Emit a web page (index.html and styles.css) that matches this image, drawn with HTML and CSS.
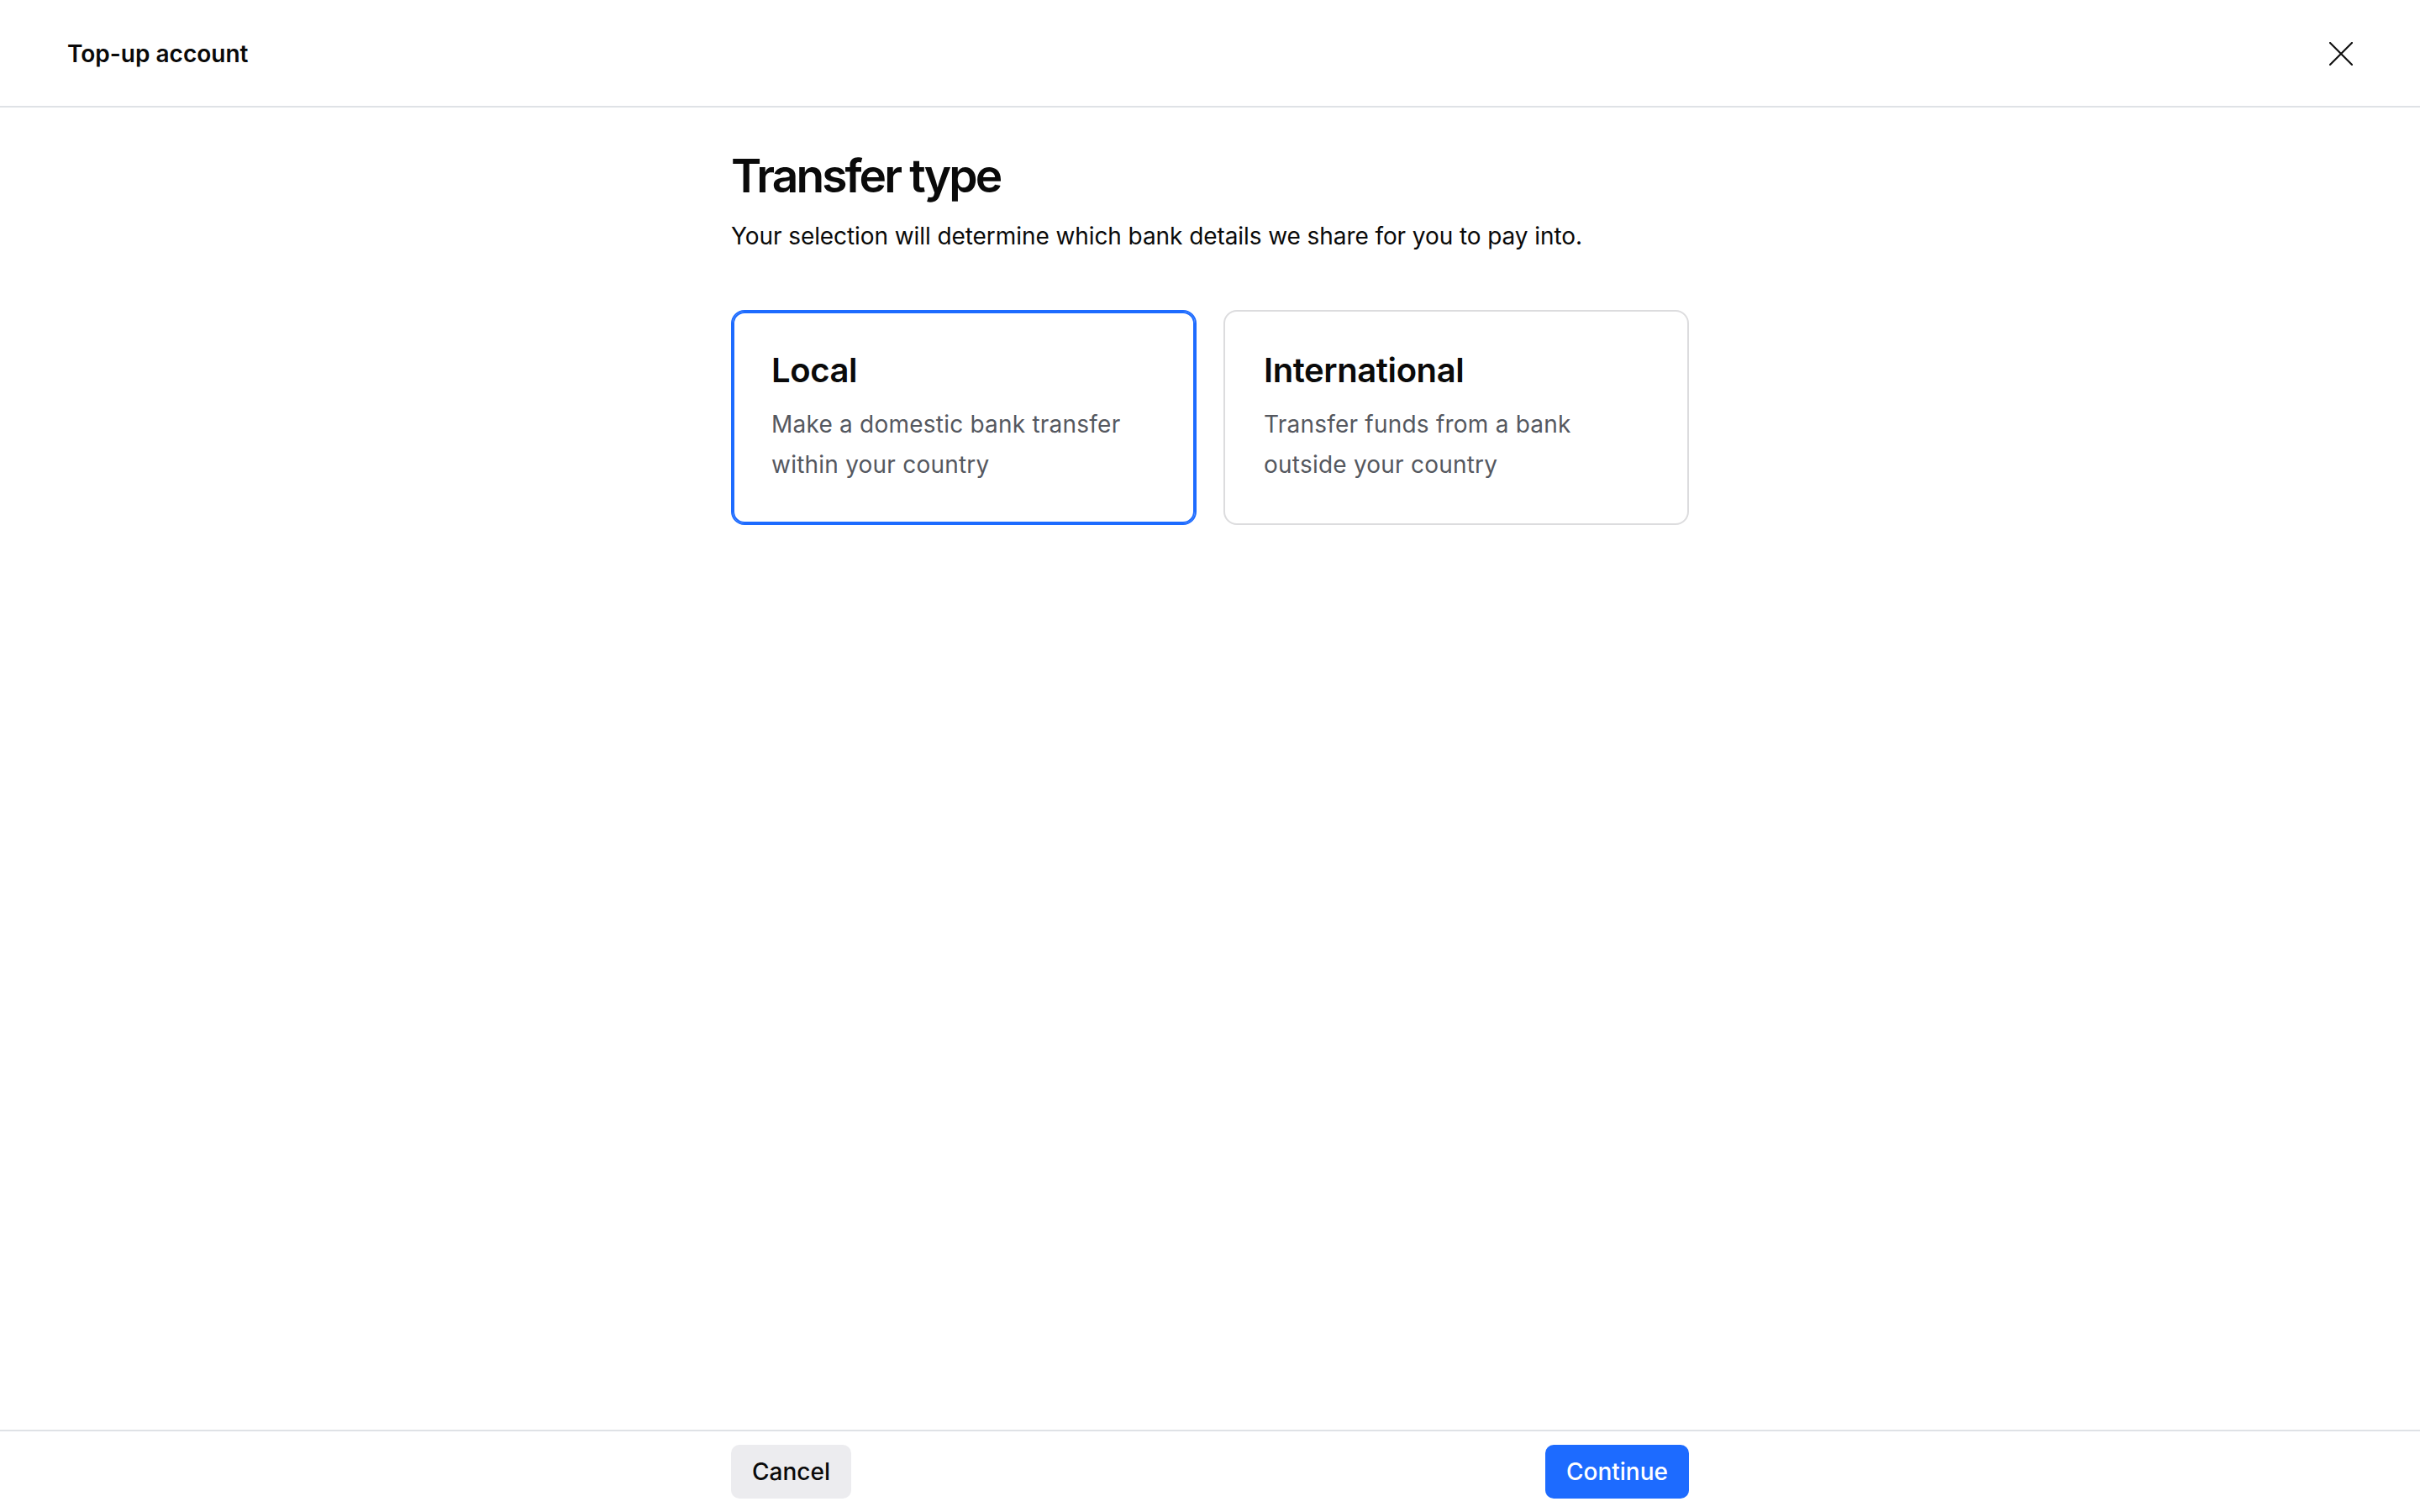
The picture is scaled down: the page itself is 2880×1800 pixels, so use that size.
FILE: index.html
```html
<!DOCTYPE html>
<html lang="en">
<head>
    <meta charset="UTF-8">
    <meta name="viewport" content="width=device-width, initial-scale=1.0">
    <title>Top-up account</title>
    <link rel="stylesheet" href="styles.css">
</head>
<body>
    <header class="topbar">
        <span class="topbar-title">Top-up account</span>
        <button class="close-btn" aria-label="Close">
            <svg width="28" height="28" viewBox="0 0 28 28" fill="none" stroke="#111" stroke-width="2.2" stroke-linecap="round">
                <path d="M1 1 L27 27 M27 1 L1 27"/>
            </svg>
        </button>
    </header>

    <main class="content">
        <div class="wrap">
            <h1>Transfer type</h1>
            <p class="lead">Your selection will determine which bank details we share for you to pay into.</p>

            <div class="options">
                <div class="option selected">
                    <h2>Local</h2>
                    <p>Make a domestic bank transfer within your country</p>
                </div>
                <div class="option">
                    <h2>International</h2>
                    <p>Transfer funds from a bank outside your country</p>
                </div>
            </div>
        </div>
    </main>

    <footer class="bottombar">
        <div class="wrap actions">
            <button class="btn btn-secondary">Cancel</button>
            <button class="btn btn-primary">Continue</button>
        </div>
    </footer>
</body>
</html>
```

FILE: styles.css
```css
* {
    box-sizing: border-box;
}
html, body {
    height: 100%;
}
body {
    margin: 0;
    font-family: Inter, "Noto Sans", sans-serif;
    color: #0a0a0a;
    background: #fff;
    display: flex;
    flex-direction: column;
}
.topbar {
    height: 128px;
    padding: 2px 80px 0;
    border-bottom: 2px solid #dfe2e6;
    display: flex;
    align-items: center;
    justify-content: space-between;
}
.topbar-title {
    font-size: 28px;
    font-weight: 600;
    letter-spacing: 0;
}
.close-btn {
    background: none;
    border: none;
    padding: 0;
    width: 28px;
    height: 28px;
    cursor: pointer;
    display: flex;
}
.content {
    flex: 1;
    padding-top: 47px;
}
.wrap {
    width: 1140px;
    margin: 0 auto;
}
h1 {
    margin: 0;
    font-size: 55px;
    line-height: 68px;
    font-weight: 600;
    letter-spacing: -2.9px;
}
.lead {
    margin: 18px 0 0;
    font-size: 28px;
    line-height: 40px;
    letter-spacing: -0.08px;
}
.options {
    margin-top: 68px;
    display: grid;
    grid-template-columns: 1fr 1fr;
    gap: 32px;
}
.option {
    border: 2px solid #dcdcde;
    border-radius: 16px;
    padding: 46px;
    cursor: pointer;
}
.option.selected {
    border-color: #1d6bff;
    box-shadow: inset 0 0 0 2px #1d6bff;
}
.option h2 {
    margin: 0 0 16px;
    font-size: 40px;
    line-height: 48px;
    font-weight: 600;
    letter-spacing: -0.4px;
}
.option p {
    margin: 0;
    font-size: 28px;
    line-height: 48px;
    letter-spacing: 0.22px;
    color: #55585f;
    max-width: 440px;
}
.bottombar {
    border-top: 2px solid #dfe2e6;
    padding: 16px 0;
}
.actions {
    display: flex;
    justify-content: space-between;
}
.btn {
    height: 64px;
    padding: 0 25px;
    border: none;
    border-radius: 10px;
    font-family: inherit;
    font-size: 28px;
    font-weight: 500;
    cursor: pointer;
}
.btn-secondary {
    background: #ececef;
    color: #0a0a0a;
}
.btn-primary {
    background: #1d6bff;
    color: #fff;
}
```
